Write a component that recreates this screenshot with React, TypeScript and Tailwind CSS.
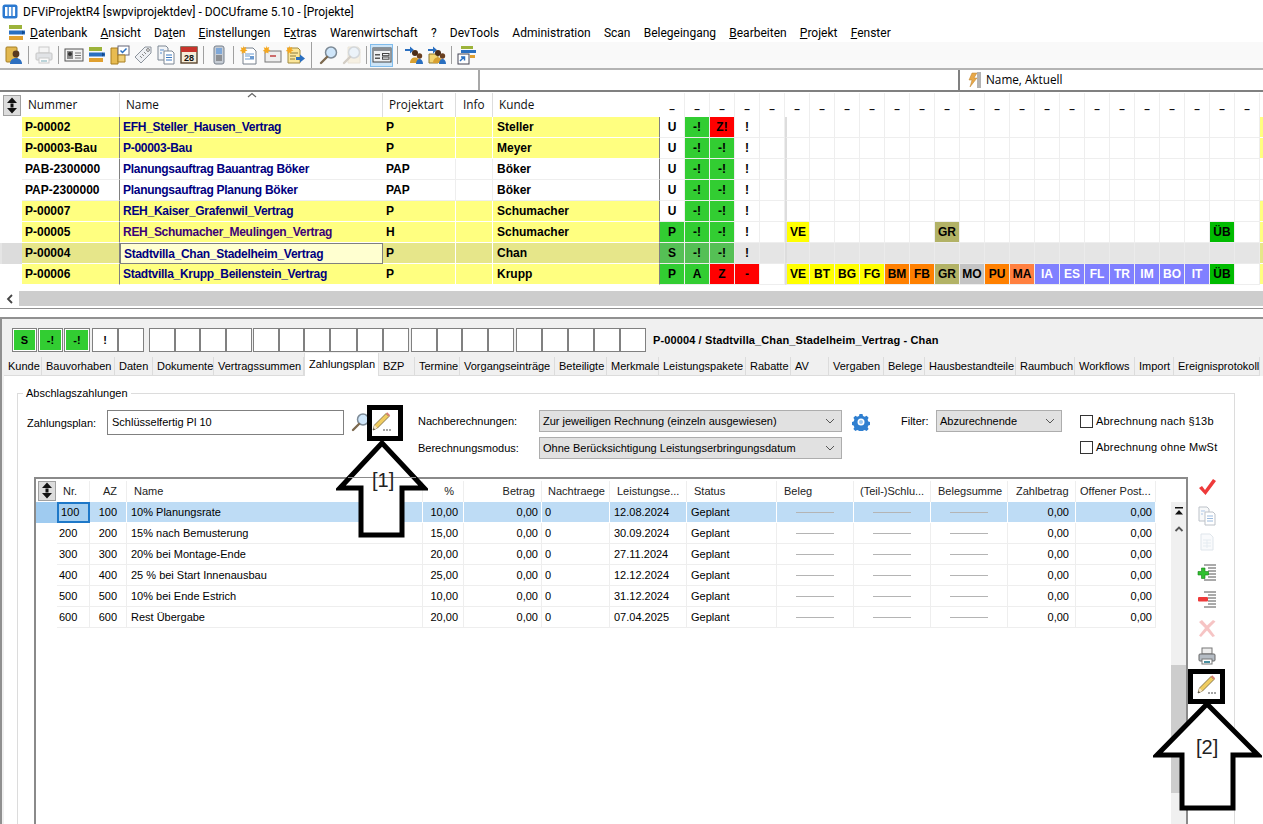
import React from "react";

const sz = "block shrink-0";
const Stack = () => (
  <svg width="20" height="18" viewBox="0 0 20 18" className={sz}>
    <rect x="2" y="1" width="13" height="4" fill="#9cb33a" />
    <rect x="2" y="6.5" width="16" height="4" fill="#2a6fc0" />
    <path d="M15 6.5l3 2-3 2z" fill="#134a8e" />
    <rect x="2" y="12" width="14" height="4" fill="#e0a030" />
  </svg>
);
const Person = () => (
  <svg width="20" height="20" viewBox="0 0 20 20" className={sz}>
    <rect x="2" y="2" width="11" height="15" rx="1" fill="#e2b850" stroke="#a57e22" />
    <circle cx="12" cy="9" r="3.4" fill="#5a3a20" />
    <path d="M6 19c0-4 3-6 6-6s6 2 6 6z" fill="#2d6fc0" />
  </svg>
);
const Printer = ({ faded }: { faded?: boolean }) => (
  <svg width="20" height="20" viewBox="0 0 20 20" className={sz} opacity={faded ? 0.35 : 1}>
    <rect x="5" y="2" width="10" height="6" fill="#eee" stroke="#777" />
    <rect x="2" y="8" width="16" height="7" rx="1" fill="#b5bcc4" stroke="#666" />
    <rect x="5" y="13" width="10" height="5" fill="#fff" stroke="#777" />
    <rect x="7" y="15" width="6" height="2" fill="#4a90a0" />
  </svg>
);
const IdCard = () => (
  <svg width="20" height="18" viewBox="0 0 20 18" className={sz}>
    <rect x="1" y="3" width="18" height="12" fill="#f2f2f2" stroke="#555" />
    <rect x="3" y="5" width="6" height="8" fill="#8a8a8a" />
    <circle cx="6" cy="8" r="2" fill="#333" />
    <path d="M11 7h6M11 9.5h6M11 12h6" stroke="#777" />
  </svg>
);
const Folder = () => (
  <svg width="20" height="20" viewBox="0 0 20 20" className={sz}>
    <path d="M1 3h7v16H1z" fill="#e8bb50" stroke="#a87f20" />
    <rect x="8" y="1" width="11" height="9" fill="#fff" stroke="#667" />
    <path d="M10.5 5.5l2 2 4-4" stroke="#2a6fc0" strokeWidth="1.5" fill="none" />
    <path d="M8 10h7v7H8z" fill="#f0cf78" stroke="#a87f20" />
  </svg>
);
const Tag = () => (
  <svg width="20" height="20" viewBox="0 0 20 20" className={sz}>
    <path d="M2 12L12 2h6v6L8 18z" fill="#eef0f3" stroke="#8c939c" />
    <circle cx="15" cy="5" r="1.4" fill="#fff" stroke="#777" />
    <path d="M7 11l2 2M9 9l2 2M11 7l2 2" stroke="#888" />
  </svg>
);
const Docs = ({ faded }: { faded?: boolean }) => (
  <svg width="20" height="20" viewBox="0 0 20 20" className={sz} opacity={faded ? 0.5 : 1}>
    <path d="M2 1h8l2 2v12H2z" fill="#f2f4f7" stroke="#7d8794" />
    <path d="M8 6h8l2 2v11H8z" fill="#fff" stroke="#7d8794" />
    <path d="M10 10h6M10 12.5h6M10 15h6" stroke="#3a78c0" />
    <path d="M4 5h4M4 8h2" stroke="#5b8fd0" />
  </svg>
);
const Calendar = () => (
  <svg width="20" height="20" viewBox="0 0 20 20" className={sz}>
    <rect x="2" y="2" width="16" height="16" fill="#f6ecd8" stroke="#5a4630" strokeWidth="1.4" />
    <rect x="2" y="2" width="16" height="5" fill="#c8342c" />
    <text x="10" y="16" textAnchor="middle" fontSize="9" fontWeight="700" fontFamily="Liberation Sans, sans-serif" fill="#111">28</text>
  </svg>
);
const Phone = () => (
  <svg width="14" height="20" viewBox="0 0 14 20" className={sz}>
    <rect x="2" y="1" width="10" height="18" rx="2" fill="#c6ccd4" stroke="#77808c" />
    <rect x="4" y="3" width="6" height="6" fill="#7fa8d8" />
    <path d="M4 11h6M4 13h6M4 15h6" stroke="#555" />
  </svg>
);
const Spark = () => <path d="M4 0.5l1 2.2 2.3-.7-.8 2.2 2 1.300-2.200.8.2 2.300-2-1.200-1.800 1.500.2-2.400-2.200-.6 1.900-1.400-.9-2.200 2.300.6z" fill="#f5a820" />;
const NewDoc = () => (
  <svg width="20" height="20" viewBox="0 0 20 20" className={sz}>
    <path d="M4 3h10l3 3v13H4z" fill="#fff" stroke="#76808c" />
    <path d="M6 9h9M6 11h5M6 14h9" stroke="#6a9ad0" />
    <rect x="11" y="11" width="4" height="3" fill="#6a9ad0" />
    <Spark />
  </svg>
);
const NewMail = () => (
  <svg width="20" height="20" viewBox="0 0 20 20" className={sz}>
    <rect x="3" y="6" width="16" height="11" fill="#eeeeee" stroke="#777" />
    <path d="M8 11h6" stroke="#c04040" strokeWidth="1.500" />
    <Spark />
  </svg>
);
const NewNote = () => (
  <svg width="20" height="20" viewBox="0 0 20 20" className={sz}>
    <path d="M3 3h10l2 2v13H3z" fill="#fbe69a" stroke="#a08a40" />
    <path d="M5 8h8M5 11h6M5 14h5" stroke="#8a7a40" />
    <path d="M11 12h4V9.500l5 4-5 4V15h-4z" fill="#2a6fc0" />
    <Spark />
  </svg>
);
const Mag = ({ faded }: { faded?: boolean }) => (
  <svg width="20" height="20" viewBox="0 0 20 20" className={sz} opacity={faded ? 0.3 : 1}>
    {faded && <path d="M6 2h10l2 2v14H6z" fill="#f0dcb0" stroke="#c8b890" />}
    <circle cx="12" cy="7.500" r="5.500" fill="#cfe6fa" stroke="#7d8a96" strokeWidth="1.500" />
    <path d="M8 12l-6 6" stroke="#7d6a50" strokeWidth="2.400" strokeLinecap="round" />
  </svg>
);
const Panel = () => (
  <svg width="20" height="18" viewBox="0 0 20 18" className={sz}>
    <rect x="1" y="2" width="18" height="14" fill="#eef0f2" stroke="#444" />
    <rect x="1" y="2" width="18" height="3" fill="#8b8f94" />
    <path d="M3 8h5v1.500H3zM3 11.500h5V13H3z" fill="#555" />
    <rect x="10.500" y="7.500" width="6.500" height="2.200" fill="none" stroke="#444" />
    <rect x="10.500" y="11" width="6.500" height="2.200" fill="none" stroke="#444" />
  </svg>
);
const People = ({ variant }: { variant?: boolean }) => (
  <svg width="20" height="20" viewBox="0 0 20 20" className={sz}>
    {variant && <path d="M2 9h9v9H2z" fill="#f2d470" stroke="#907a30" />}
    <path d="M1 4h5V1.500l4 3.500-4 3.500V6H1z" fill="#2a6fc0" />
    <circle cx="11" cy="8" r="3" fill="#4a2c18" />
    <circle cx="15.500" cy="11" r="2.700" fill="#6a4020" />
    <path d="M6 18c0-3.500 2-5.500 5-5.500s4 2 4 5.500z" fill="#d8a030" />
    <path d="M12 19c0-3 1.500-5 3.500-5s3.500 2 3.500 5z" fill="#2a6fc0" />
  </svg>
);
const StackArrow = () => (
  <svg width="20" height="20" viewBox="0 0 20 20" className={sz}>
    <rect x="4" y="1" width="12" height="3" fill="#9cb33a" />
    <rect x="4" y="5" width="15" height="3" fill="#2a6fc0" />
    <rect x="1" y="9" width="11" height="10" fill="#fff" stroke="#445" />
    <path d="M3 16l4-4M4 12h3.500v3.500" stroke="#2a6fc0" strokeWidth="1.500" fill="none" />
    <rect x="13" y="10" width="5" height="3" fill="#e0a030" />
  </svg>
);
const Bolt = () => (
  <svg width="16" height="16" viewBox="0 0 16 16" className={sz}>
    <path d="M6 1h5L8 6h3l-7 9 2-7H3z" fill="#e8a848" stroke="#b88030" strokeWidth=".5" />
    <path d="M11 1h4M11 3h4M11 5h4M11 7h4M11 9h4M11 11h4M11 13h4M11 15h4" stroke="#666" />
  </svg>
);
const Pencil = () => (
  <svg width="22" height="22" viewBox="0 0 22 22" className={sz}>
    <path d="M2 19l1.500-5L15 2.500l3 3L6.500 17z" fill="#f0cc60" stroke="#6e5e36" strokeWidth=".8" />
    <path d="M15 2.500l3 3 1.200-1.200-3-3z" fill="#d87a70" />
    <path d="M2 19l1.500-5 3 3z" fill="#f6e6c6" />
    <path d="M2 19l.6-2 1.400 1.400z" fill="#333" />
    <circle cx="13" cy="19" r=".8" fill="#333" /><circle cx="16" cy="19" r=".8" fill="#333" /><circle cx="19" cy="19" r=".8" fill="#333" />
  </svg>
);
const Gear = () => (
  <svg width="18" height="18" viewBox="0 0 18 18" className={sz}>
    <path d="M7.500 1h3l.5 2 1.700.8 1.900-1 2 2-1 1.900.7 1.800 2 .5v3l-2 .4-.7 1.800 1 1.800-2 2-1.900-1-1.700.7-.5 2h-3l-.5-2-1.800-.7-1.800 1-2-2 1-1.800-.8-1.800-2-.4v-3l2-.5.8-1.800-1-1.900 2-2 1.800 1L7 3z" fill="#2f7fd0" />
    <circle cx="9" cy="9" r="3.500" fill="#fff" />
    <circle cx="9" cy="9" r="2" fill="#9cc8f0" />
  </svg>
);
const Check = () => (
  <svg width="20" height="20" viewBox="0 0 20 20" className={sz}>
    <path d="M2 11l3-2 3 4 8-11 3 2L8.500 18z" fill="#ee3a3a" />
  </svg>
);
const PlainDoc = () => (
  <svg width="20" height="20" viewBox="0 0 20 20" className={sz} opacity=".35">
    <path d="M4 2h9l3 3v13H4z" fill="#eef3f8" stroke="#a8b8c8" />
    <path d="M6 8h8M6 11h8M6 14h8M10 8v8" stroke="#b8c8d8" />
  </svg>
);
const ListPlus = ({ minus }: { minus?: boolean }) => (
  <svg width="20" height="20" viewBox="0 0 20 20" className={sz}>
    <path d="M7 2h12M11 5h8M11 8h8M11 11h8M11 14h8M7 17h12" stroke="#555" />
    {minus ? <rect x="1" y="7" width="10" height="4.500" rx="1" fill="#ee3a3a" /> : <path d="M4.500 5h3.500v3.500h3.500V12H8v3.500H4.500V12H1V8.500h3.500z" fill="#2fc02f" stroke="#1a801a" strokeWidth=".6" />}
  </svg>
);
const Cross = () => (
  <svg width="20" height="20" viewBox="0 0 20 20" className={sz} opacity=".35">
    <path d="M2 4l3-2 5 5.500L16 2l2.500 1.500L12 10l6 8-2.500 1L10 12.500 4 19l-2-1.500L8 10z" fill="#e85a5a" />
  </svg>
);

const TopBtn = () => (
  <svg width="12" height="17" viewBox="0 0 12 17" className={sz}>
    <path d="M6 .5L11 6H1zM4.500 6.500h3v4h-3zM1 11h10l-5 5.500z" fill="#111" />
  </svg>
);

const menus: [string, string, string][] = [
  ["", "D", "atenbank"], ["", "A", "nsicht"], ["Da", "t", "en"], ["", "E", "instellungen"], ["E", "x", "tras"],
  ["Warenwirtschaft", "", ""], ["?", "", ""], ["DevTools", "", ""], ["Administration", "", ""], ["Scan", "", ""], ["Belegeingang", "", ""],
  ["", "B", "earbeiten"], ["", "P", "rojekt"], ["", "F", "enster"],
];

type Chip = [number, string, string, string];
const allChips: Chip[] = [
  [5, "VE", "bg-[#ffff00]", "text-black"], [6, "BT", "bg-[#ffff00]", "text-black"], [7, "BG", "bg-[#ffff00]", "text-black"], [8, "FG", "bg-[#ffff00]", "text-black"],
  [9, "BM", "bg-[#ff8000]", "text-black"], [10, "FB", "bg-[#ff8000]", "text-black"], [11, "GR", "bg-[#b2b266]", "text-black"], [12, "MO", "bg-[#c4c4c4]", "text-black"],
  [13, "PU", "bg-[#ff8000]", "text-black"], [14, "MA", "bg-[#ff8040]", "text-black"], [15, "IA", "bg-[#8080ff]", "text-white"], [16, "ES", "bg-[#8080ff]", "text-white"],
  [17, "FL", "bg-[#8080ff]", "text-white"], [18, "TR", "bg-[#8080ff]", "text-white"], [19, "IM", "bg-[#8080ff]", "text-white"], [20, "BO", "bg-[#8080ff]", "text-white"],
  [21, "IT", "bg-[#8080ff]", "text-white"], [22, "ÜB", "bg-[#00bb00]", "text-black"],
];

type Row = { n: string; name: string; art: string; k: string; y: boolean; s: [string, string][]; chips: Chip[]; purple?: boolean; sel?: boolean };
const G = "bg-[#32cd32]";
const W = "bg-transparent";
const base: [string, string][] = [["U", W], ["-!", G], ["-!", G], ["!", W]];
const rows: Row[] = [
  { n: "P-00002", name: "EFH_Steller_Hausen_Vertrag", art: "P", k: "Steller", y: true, s: [["U", W], ["-!", G], ["Z!", "bg-[#ff0000]"], ["!", W]], chips: [] },
  { n: "P-00003-Bau", name: "P-00003-Bau", art: "P", k: "Meyer", y: true, s: base, chips: [] },
  { n: "PAB-2300000", name: "Planungsauftrag Bauantrag Böker", art: "PAP", k: "Böker", y: false, s: base, chips: [] },
  { n: "PAP-2300000", name: "Planungsauftrag Planung Böker", art: "PAP", k: "Böker", y: false, s: base, chips: [] },
  { n: "P-00007", name: "REH_Kaiser_Grafenwil_Vertrag", art: "P", k: "Schumacher", y: true, s: base, chips: [] },
  { n: "P-00005", name: "REH_Schumacher_Meulingen_Vertrag", art: "H", k: "Schumacher", y: true, purple: true, s: [["P", G], ["-!", G], ["-!", G], ["!", W]], chips: [allChips[0], allChips[6], allChips[17]] },
  { n: "P-00004", name: "Stadtvilla_Chan_Stadelheim_Vertrag", art: "P", k: "Chan", y: true, sel: true, s: [["S", "bg-[#55c055]"], ["-!", "bg-[#55c055]"], ["-!", "bg-[#55c055]"], ["!", W]], chips: [] },
  { n: "P-00006", name: "Stadtvilla_Krupp_Beilenstein_Vertrag", art: "P", k: "Krupp", y: true, s: [["P", G], ["A", G], ["Z", "bg-[#ff0000]"], ["-", "bg-[#ff0000]"]], chips: allChips },
];
const idx = Array.from({ length: 24 }, (_, i) => i);

const tabs: [string, string][] = [
  ["Kunde", "w-[38px]"], ["Bauvorhaben", "w-[73px]"], ["Daten", "w-[38px]"], ["Dokumente", "w-[61px]"], ["Vertragssummen", "w-[90px]"],
  ["Zahlungsplan", "w-[75px]"], ["BZP", "w-[36px]"], ["Termine", "w-[45px]"], ["Vorgangseinträge", "w-[95px]"], ["Beteiligte", "w-[52px]"], ["Merkmale", "w-[52px]"],
  ["Leistungspakete", "w-[87px]"], ["Rabatte", "w-[45px]"], ["AV", "w-[38px]"], ["Vergaben", "w-[55px]"], ["Belege", "w-[41px]"], ["Hausbestandteile", "w-[91px]"],
  ["Raumbuch", "w-[59px]"], ["Workflows", "w-[60px]"], ["Import", "w-[39px]"], ["Ereignisprotokoll", "w-[86px]"],
];

const pay = [
  ["100", "100", "10% Planungsrate", "10,00", "12.08.2024"],
  ["200", "200", "15% nach Bemusterung", "15,00", "30.09.2024"],
  ["300", "300", "20% bei Montage-Ende", "20,00", "27.11.2024"],
  ["400", "400", "25 % bei Start Innenausbau", "25,00", "12.12.2024"],
  ["500", "500", "10% bei Ende Estrich", "10,00", "31.12.2024"],
  ["600", "600", "Rest Übergabe", "20,00", "07.04.2025"],
];

const Sep = ({ w = "w-[7px]", h = "h-[18px]" }: { w?: string; h?: string }) => (
  <div className={`${w} flex justify-center shrink-0`}><div className={`w-px ${h} bg-[#a0a0a0]`} /></div>
);
const Slot = ({ children, active }: { children: React.ReactNode; active?: boolean }) => (
  <div className={`w-[23px] h-[23px] flex items-center justify-center shrink-0 ${active ? "bg-[#cce4f7] border border-[#80bcec]" : ""}`}>{children}</div>
);
const Box = ({ children, green, w }: { children?: React.ReactNode; green?: boolean; w: string }) => (
  <div className={`${w} h-[24px] shrink-0 border border-[#808080] flex items-center justify-center text-[11px] font-bold ${green ? "bg-[#32cd32] outline outline-1 -outline-offset-2 outline-white" : "bg-white"}`}>{children}</div>
);
const Dash = () => <div className="h-px w-[38px] bg-[#b4b4b4]" />;

const Arrow = ({ cls, w, h, d, inner }: { cls: string; w: number; h: number; d: string; inner?: string }) => (
  <svg width={w} height={h} viewBox={`0 0 ${w} ${h}`} className={`absolute ${cls}`}>
    <path d={d} fill="#fff" stroke="#000" strokeWidth="5" strokeLinejoin="miter" />
    {inner && <path d={inner} stroke="#8a8a8a" strokeWidth="1" />}
  </svg>
);

export default function App() {
  return (
    <div className="relative w-[1263px] h-[824px] overflow-hidden bg-white text-black font-['Liberation_Sans',sans-serif]">
      {/* title */}
      <div className="h-[23px] flex items-center pl-[2px] font-['Roboto',sans-serif] text-[12px] bg-white">
        <svg width="16" height="15" viewBox="0 0 16 15" className={sz}>
          <rect x=".5" y=".5" width="15" height="14" rx="2.500" fill="#2a78d0" />
          <path d="M3 3h2.500v9H3zM6.800 3h2.500v9H6.800zM10.600 3h2.500v9h-2.500z" fill="#fff" />
        </svg>
        <span className="ml-[5px]">DFViProjektR4 [swpviprojektdev] - DOCUframe 5.10 - [Projekte]</span>
      </div>
      {/* menu */}
      <div className="h-[19px] flex items-center pl-[7px] font-['Roboto',sans-serif] text-[12px] bg-white">
        <div className="w-[23px] shrink-0"><Stack /></div>
        <div className="flex gap-[13.2px]">
          {menus.map((m, i) => (
            <span key={i} className="whitespace-nowrap">{m[0]}{m[1] && <u>{m[1]}</u>}{m[2]}</span>
          ))}
        </div>
      </div>
      {/* toolbar */}
      <div className="h-[26px] flex items-center pl-[2px] bg-[#f9f9f9]">
        <Slot><Person /></Slot><Sep />
        <Slot><Printer faded /></Slot><Sep />
        <Slot><IdCard /></Slot><Slot><Stack /></Slot><Slot><Folder /></Slot><Slot><Tag /></Slot><Slot><Docs /></Slot><Slot><Calendar /></Slot><Sep />
        <Slot><Phone /></Slot><Sep />
        <Slot><NewDoc /></Slot><Slot><NewMail /></Slot><Slot><NewNote /></Slot>
        <Sep w="w-[11px]" h="h-[26px]" />
        <Slot><Mag /></Slot><Slot><Mag faded /></Slot><Sep />
        <Slot active><Panel /></Slot><Sep w="w-[9px]" />
        <Slot><People /></Slot><Slot><People variant /></Slot><Sep />
        <Slot><StackArrow /></Slot>
      </div>
      {/* filter */}
      <div className="h-[24px] flex border-y-2 border-t-[#b4b4b4] border-b-[#808080] bg-white text-[11.75px] font-['Open_Sans',sans-serif]">
        <div className="w-[480px] border-r-2 border-[#a8a8a8]" />
        <div className="w-[480px] border-r-2 border-[#808080]" />
        <div className="flex items-center pl-[6px] gap-[2px]"><Bolt /><span className="ml-[2px]">Name, Aktuell</span></div>
      </div>
      {/* top grid header */}
      <div className="relative h-[25px] pt-[1px] flex text-[11.75px] font-['Open_Sans',sans-serif] text-[#111]">
        <div className="w-[22px] shrink-0 flex items-center justify-center pl-[2px]">
          <div className="w-[18px] h-[21px] bg-[#dcdcdc] border border-[#a0a0a0] flex items-center justify-center"><TopBtn /></div>
        </div>
        <div className="w-[98px] pl-[6px] flex items-center border-r border-[#ddd]">Nummer</div>
        <div className="w-[263px] pl-[6px] flex items-center border-r border-[#ddd]">Name</div>
        <div className="w-[73px] pl-[6px] flex items-center border-r border-[#ddd]">Projektart</div>
        <div className="w-[37px] pl-[7px] flex items-center border-r border-[#ddd]">Info</div>
        <div className="w-[167px] pl-[6px] flex items-center">Kunde</div>
        {idx.map((i) => (
          <div key={i} className="w-[25px] shrink-0 border-r border-[#eeeeee] flex items-end justify-center font-['Liberation_Sans',sans-serif] font-bold text-[10px] leading-[12px] pb-[1px]">–</div>
        ))}
        <svg width="12" height="6" viewBox="0 0 12 6" className="absolute left-[246px] top-[0px]"><path d="M2 5l4-3.500L10 5" fill="none" stroke="#666" strokeWidth="1.200" /></svg>
      </div>
      {/* top rows */}
      <div className="h-[168px] text-[12px] font-bold">
        {rows.map((r) => {
          const bg = r.sel ? "bg-[#e6e68a]" : r.y ? "bg-[#ffff80]" : "bg-white";
          const line = r.y ? "border-white" : "border-[#eeeeee]";
          return (
            <div key={r.n} className={`h-[21px] flex ${r.sel ? "bg-[#e5e5e5]" : "bg-white"}`}>
              <div className={`shrink-0 ${r.sel ? "bg-[#dcdcdc] ml-[2px] w-[20px]" : "w-[22px]"}`} />
              <div className={`w-[98px] shrink-0 ${bg} pl-[3px] flex items-center border-b ${line} border-r-[1px] border-r-[#808080] whitespace-nowrap`}>{r.n}</div>
              <div className={`w-[263px] shrink-0 ${r.sel ? "bg-[#ffffd0] border border-[#808080]" : `${bg} border-b ${line}`} pl-[3px] flex items-center whitespace-nowrap tracking-[-0.28px] ${r.purple ? "text-[#3c0078]" : "text-[#000080]"}`}>{r.name}</div>
              <div className={`w-[73px] shrink-0 ${bg} pl-[3px] flex items-center border-b border-r ${line}`}>{r.art}</div>
              <div className={`w-[37px] shrink-0 ${bg} border-b border-r ${line}`} />
              <div className={`w-[167px] shrink-0 ${bg} pl-[4px] flex items-center border-b ${line} border-r-[1px] border-r-[#808080]`}>{r.k}</div>
              {idx.map((i) => {
                const st = i < 4 ? r.s[i] : undefined;
                const chip = r.chips.find((c) => c[0] === i);
                const cellLine = r.sel ? "border-[#ebebeb]" : "border-[#eeeeee]";
                return (
                  <div key={i} className={`w-[25px] shrink-0 border-b border-r flex ${cellLine} ${i === 5 ? "border-l-2 border-l-[#dddddd]" : ""}`}>
                    {st && <div className={`flex-1 flex items-center justify-center ${st[1]}`}>{st[0]}</div>}
                    {chip && <div className={`flex-1 flex items-center justify-center text-[12px] ${chip[2]} ${chip[3]}`}>{chip[1]}</div>}
                  </div>
                );
              })}
              <div className={`w-[3px] shrink-0 ${r.sel ? "bg-[#e6e68a]" : r.y ? "bg-[#ffff80]" : ""} border-b ${line}`} />
            </div>
          );
        })}
      </div>
      {/* horizontal scroll */}
      <div className="h-[6px]" />
      <div className="h-[15px] flex">
        <div className="w-[19px] shrink-0 flex items-center justify-center">
          <svg width="8" height="10" viewBox="0 0 8 10"><path d="M6 1L2 5l4 4" fill="none" stroke="#444" strokeWidth="1.800" /></svg>
        </div>
        <div className="flex-1 bg-[#cdcdcd]" />
      </div>
      <div className="h-[2px]" />
      <div className="h-[9px] border-t border-[#909090]" />
      {/* lower panel */}
      <div className="h-[507px] border-t-2 border-l-2 border-[#909090] bg-[#f0f0f0] flex flex-col text-[11px]">
        <div className="h-[34px] shrink-0 pt-[9px] pl-[10px] flex">
          <Box w="w-[25px] mr-px" green>S</Box>
          <Box w="w-[25px] mr-px" green>-!</Box>
          <Box w="w-[26px] mr-[2px]" green>-!</Box>
          <Box w="w-[26px]">!</Box>
          <Box w="w-[26px] mr-[5px]" />
          <Box w="w-[26px]" /><Box w="w-[25px]" /><Box w="w-[26px]" /><Box w="w-[26px] mr-px" />
          <Box w="w-[26px]" /><Box w="w-[25px]" /><Box w="w-[26px]" /><Box w="w-[27px]" /><Box w="w-[26px]" /><Box w="w-[26px] mr-[2px]" />
          <Box w="w-[26px]" /><Box w="w-[25px]" /><Box w="w-[26px]" /><Box w="w-[26px] mr-[2px]" />
          <Box w="w-[26px]" /><Box w="w-[26px]" /><Box w="w-[26px]" /><Box w="w-[26px]" /><Box w="w-[26px]" />
          <span className="ml-[7px] self-center font-bold text-[11px] tracking-[0.12px] whitespace-nowrap">P-00004 / Stadtvilla_Chan_Stadelheim_Vertrag - Chan</span>
        </div>
        <div className="h-[23px] shrink-0 flex pl-[2px] items-end">
          {tabs.map(([t, w]) => {
            const active = t === "Zahlungsplan";
            return (
              <div key={t} className={`${w} shrink-0 whitespace-nowrap flex pl-[4px] ${active ? "h-[23px] bg-white pt-[3px] border-x border-[#dddddd]" : "h-[19px] items-center border-r border-b border-[#dcdcdc] bg-[#f0f0f0]"}`}>{t}</div>
            );
          })}
        </div>
        <div className="flex-1 bg-white ml-[2px] px-[13px] min-h-0">
          <fieldset className="border border-[#dcdcdc] mt-[11px] h-[600px] w-[1218px]">
            <legend className="ml-[5px] px-[3px] leading-[13px]">Abschlagszahlungen</legend>
            <div className="h-[77px] pt-[10px] flex">
              <div className="w-[89px] pl-[9px] pt-[5px] shrink-0">Zahlungsplan:</div>
              <div className="w-[237px] h-[25px] shrink-0 border border-[#808080] pl-[4px] flex items-center">Schlüsselfertig Pl 10</div>
              <div className="w-[25px] pl-[7px] pt-[2px] shrink-0"><Mag /></div>
              <div className="w-[49px] pl-[2px] pt-px shrink-0"><Pencil /></div>
              <div className="w-[121px] shrink-0 pt-[5px] leading-[13px]">
                <div>Nachberechnungen:</div>
                <div className="mt-[14px]">Berechnungsmodus:</div>
              </div>
              <div className="w-[303px] shrink-0 flex flex-col gap-[5px]">
                <div className="h-[22px] bg-[#e1e1e1] border border-[#adadad] flex items-center justify-between pl-[3px] pr-[6px]">
                  <span>Zur jeweiligen Rechnung (einzeln ausgewiesen)</span>
                  <svg width="10" height="6" viewBox="0 0 10 6"><path d="M1 1l4 4 4-4" fill="none" stroke="#555" /></svg>
                </div>
                <div className="h-[22px] bg-[#e1e1e1] border border-[#adadad] flex items-center justify-between pl-[3px] pr-[6px]">
                  <span>Ohne Berücksichtigung Leistungserbringungsdatum</span>
                  <svg width="10" height="6" viewBox="0 0 10 6"><path d="M1 1l4 4 4-4" fill="none" stroke="#555" /></svg>
                </div>
              </div>
              <div className="w-[59px] pl-[10px] pt-[3px] shrink-0"><Gear /></div>
              <div className="w-[35px] pt-[5px] leading-[13px] shrink-0">Filter:</div>
              <div className="w-[126px] h-[22px] shrink-0 bg-[#e1e1e1] border border-[#adadad] flex items-center justify-between pl-[3px] pr-[6px]">
                <span>Abzurechnende</span>
                <svg width="10" height="6" viewBox="0 0 10 6"><path d="M1 1l4 4 4-4" fill="none" stroke="#555" /></svg>
              </div>
              <div className="ml-[18px] pt-[5px] flex flex-col gap-[13px] whitespace-nowrap tracking-[0.2px]">
                <div className="flex items-center gap-[3px] h-[13px]"><div className="w-[13px] h-[13px] border border-[#333] bg-white" />Abrechnung nach §13b</div>
                <div className="flex items-center gap-[3px] h-[13px]"><div className="w-[13px] h-[13px] border border-[#333] bg-white" />Abrechnung ohne MwSt</div>
              </div>
            </div>
            <div className="flex ml-[16px] h-[400px]">
              <div className="w-[1154px] h-full border-2 border-r-2 border-[#8a8a8a] border-b-0 flex flex-col shrink-0">
                <div className="h-[23px] pt-[2px] flex text-[#222] shrink-0">
                  <div className="w-[21px] flex items-center justify-center shrink-0"><div className="w-[18px] h-[20px] -mt-[2px] bg-[#dcdcdc] border border-[#a0a0a0] flex items-center justify-center"><TopBtn /></div></div>
                  <div className="w-[33px] pl-[6px] flex items-center border-r border-[#eeeeee]">Nr.</div>
                  <div className="w-[37px] pr-[9px] flex items-center justify-end border-r border-[#eeeeee]">AZ</div>
                  <div className="w-[296px] pl-[7px] flex items-center border-r border-[#eeeeee]">Name</div>
                  <div className="w-[41px] pr-[9px] flex items-center justify-end border-r border-[#eeeeee]">%</div>
                  <div className="w-[78px] pr-[6px] flex items-center justify-end border-r border-[#eeeeee]">Betrag</div>
                  <div className="w-[68px] pl-[6px] flex items-center border-r border-[#eeeeee]">Nachtraege</div>
                  <div className="w-[77px] pl-[7px] flex items-center border-r border-[#eeeeee] whitespace-nowrap">Leistungse...</div>
                  <div className="w-[90px] pl-[7px] flex items-center border-r border-[#eeeeee]">Status</div>
                  <div className="w-[77px] pl-[7px] flex items-center border-r border-[#eeeeee]">Beleg</div>
                  <div className="w-[77px] pl-[6px] flex items-center border-r border-[#eeeeee] whitespace-nowrap">(Teil-)Schlu...</div>
                  <div className="w-[77px] pl-[7px] flex items-center border-r border-[#eeeeee]">Belegsumme</div>
                  <div className="w-[68px] pl-[8px] flex items-center border-r border-[#eeeeee]">Zahlbetrag</div>
                  <div className="w-[80px] pl-[4px] flex items-center border-r border-[#eeeeee] whitespace-nowrap">Offener Post...</div>
                </div>
                <div className="flex flex-1 min-h-0">
                  <div className="w-[1120px] shrink-0">
                    {pay.map((p, i) => {
                      const sel = i === 0;
                      const c = `h-[21px] flex items-center border-r border-b ${sel ? "bg-[#bedcf5] border-white" : "border-[#eeeeee]"}`;
                      return (
                        <div key={p[0]} className="flex">
                          <div className={`w-[21px] h-[21px] shrink-0 ${sel ? "bg-[#9fcbf0]" : ""}`} />
                          <div className={`w-[33px] pl-[2px] ${sel ? "h-[21px] flex items-center bg-[#a8d0f0] border-2 border-[#1e78c8]" : c}`}>{p[0]}</div>
                          <div className={`w-[37px] pr-[9px] justify-end ${c}`}>{p[1]}</div>
                          <div className={`w-[296px] pl-[4px] ${c}`}>{p[2]}</div>
                          <div className={`w-[41px] pr-[5px] justify-end ${c}`}>{p[3]}</div>
                          <div className={`w-[78px] pr-[3px] justify-end ${c}`}>0,00</div>
                          <div className={`w-[68px] pl-[3px] ${c}`}>0</div>
                          <div className={`w-[77px] pl-[4px] ${c}`}>{p[4]}</div>
                          <div className={`w-[90px] pl-[4px] ${c}`}>Geplant</div>
                          <div className={`w-[77px] justify-center ${c}`}><Dash /></div>
                          <div className={`w-[77px] justify-center ${c}`}><Dash /></div>
                          <div className={`w-[77px] justify-center ${c}`}><Dash /></div>
                          <div className={`w-[68px] pr-[6px] justify-end ${c}`}>0,00</div>
                          <div className={`w-[80px] pr-[3px] justify-end ${c}`}>0,00</div>
                        </div>
                      );
                    })}
                  </div>
                  <div className="w-[15px] shrink-0" />
                  <div className="w-[15px] shrink-0 bg-[#f0f0f0] flex flex-col">
                    <div className="h-[163px] shrink-0 flex flex-col items-center pt-[4px]">
                      <svg width="10" height="10" viewBox="0 0 10 10"><path d="M1 1h8v1.500H1zM5 4l4 4.500H1z" fill="#111" /></svg>
                      <svg width="10" height="8" viewBox="0 0 10 8" className="mt-[9px]"><path d="M1.500 6L5 2.500 8.500 6" fill="none" stroke="#555" strokeWidth="1.800" /></svg>
                    </div>
                    <div className="h-[128px] shrink-0 bg-[#cdcdcd]" />
                  </div>
                </div>
              </div>
              <div className="flex flex-col items-center w-[37px] shrink-0">
                <div className="mt-[0px]"><Check /></div>
                <div className="mt-[9px]"><Docs faded /></div>
                <div className="mt-[6px]"><PlainDoc /></div>
                <div className="mt-[11px]"><ListPlus /></div>
                <div className="mt-[7px]"><ListPlus minus /></div>
                <div className="mt-[8px]"><Cross /></div>
                <div className="mt-[8px]"><Printer /></div>
                <div className="mt-[8px]"><Pencil /></div>
              </div>
            </div>
          </fieldset>
        </div>
      </div>

      {/* annotations */}
      <div className="absolute left-[367px] top-[405px] w-[36px] h-[36px] border-[5px] border-black" />
      <Arrow cls="left-[336px] top-[440px]" w={92} h={99} d="M46 3L4 48H25V95H66V48H88Z" inner="M12 37.500H80" />
      <div className="absolute left-[372px] top-[468px] text-[20px] leading-[24px] text-[#222] font-['Liberation_Sans',sans-serif]">[1]</div>
      <div className="absolute left-[1188px] top-[669px] w-[37px] h-[35px] border-[5px] border-black" />
      <Arrow cls="left-[1153px] top-[701px]" w={109} h={111} d="M54 3L4 54H29V107H80V54H105Z" />
      <div className="absolute left-[1196px] top-[735px] text-[20px] leading-[24px] text-[#222] font-['Liberation_Sans',sans-serif]">[2]</div>
    </div>
  );
}
